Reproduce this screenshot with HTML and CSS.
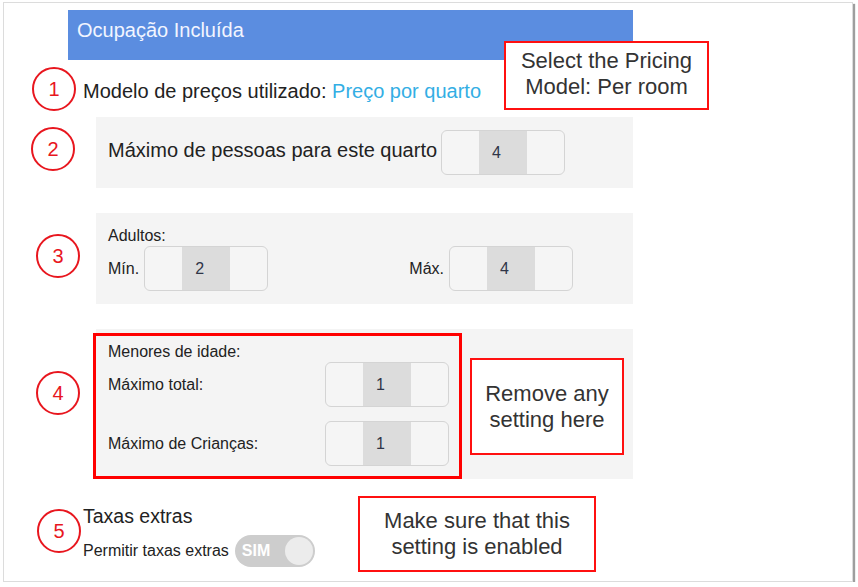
FILE: index.html
```html
<!DOCTYPE html>
<html lang="pt">
<head>
<meta charset="utf-8">
<title>Ocupação Incluída</title>
<link rel="stylesheet" href="styles.css">
</head>
<body>
<div class="frame">
  <div class="callout callout-pricing">Select the Pricing<br>Model: Per room</div>
  <div class="header">Ocupação Incluída</div>
  <div class="content">
    <div class="row-model">
      <span class="mark mark-1">1</span>
      Modelo de preços utilizado: <span class="link">Preço por quarto</span>
    </div>

    <div class="panel panel-max">
      <span class="mark mark-2">2</span>
      <span class="label-lg">Máximo de pessoas para este quarto</span>
      <div class="spinner"><span></span><span class="val">4</span><span></span></div>
    </div>

    <div class="panel panel-adults">
      <span class="mark mark-3">3</span>
      <div class="label-sm">Adultos:</div>
      <div class="adult-row">
        <div class="pair"><span class="label-sm">Mín.</span><div class="spinner"><span></span><span class="val">2</span><span></span></div></div>
        <div class="pair"><span class="label-sm">Máx.</span><div class="spinner"><span></span><span class="val">4</span><span></span></div></div>
      </div>
    </div>

    <div class="panel panel-minors">
      <span class="mark mark-4">4</span>
      <div class="redbox">
        <div class="label-sm">Menores de idade:</div>
        <div class="minor-row first"><span class="label-sm">Máximo total:</span><div class="spinner"><span></span><span class="val">1</span><span></span></div></div>
        <div class="minor-row"><span class="label-sm">Máximo de Crianças:</span><div class="spinner"><span></span><span class="val">1</span><span></span></div></div>
      </div>
      <div class="callout callout-remove">Remove any<br>setting here</div>
    </div>

    <div class="row-extras">
      <span class="mark mark-5">5</span>
      <div class="extras">
        <div class="extras-title">Taxas extras</div>
        <div class="extras-row">
          <span class="extras-label">Permitir taxas extras</span>
          <span class="toggle"><span class="toggle-text">SIM</span><span class="knob"></span></span>
        </div>
      </div>
      <div class="callout callout-enabled">Make sure that this<br>setting is enabled</div>
    </div>
  </div>
</div>
</body>
</html>
```

FILE: styles.css
```css
* { box-sizing: border-box; }
html, body { margin: 0; padding: 0; background: #ffffff; }
body { font-family: "Liberation Sans", Arial, sans-serif; color: #222; }

.frame {
  position: relative;
  margin: 2px 0 0 3px;
  width: 850px;
  height: 580px;
  background: #ffffff;
  border: 1px solid #dcdcdc;
  box-shadow: 2px 2px 1px rgba(0, 0, 0, 0.38);
}

.header {
  margin: 7px 0 0 64px;
  width: 565px;
  height: 50px;
  background: #5b8de0;
  color: #f2f5ff;
  font-size: 20px;
  line-height: 24px;
  padding: 8px 9px 0;
}

.content { padding-left: 92px; width: 629px; }

.mark {
  position: absolute;
  width: 44px;
  height: 44px;
  border: 2px solid #e8161e;
  border-radius: 50%;
  color: #e8161e;
  font-size: 20px;
  display: flex;
  align-items: center;
  justify-content: center;
  background: transparent;
}
.mark-1 { left: -51px; top: -12px; }
.mark-2 { left: -65px; top: 10px; }
.mark-3 { left: -60px; top: 21px; }
.mark-4 { left: -60px; top: 42px; }
.mark-5 { left: -46px; top: 5px; }

.row-model {
  position: relative;
  margin: 19px 0 0 -13px;
  font-size: 20px;
  line-height: 24px;
  color: #222;
}
.link { color: #33aee4; }

.panel { position: relative; background: #f4f4f4; }

.panel-max {
  margin-top: 14px;
  height: 71px;
  padding: 0 12px;
  display: flex;
  align-items: center;
  gap: 4px;
}
.label-lg { font-size: 20px; line-height: 24px; color: #222; padding-bottom: 6px; }
.label-sm { font-size: 16px; line-height: 18px; color: #222; }

.spinner {
  width: 124px;
  height: 45px;
  border: 1px solid #d4d4d4;
  border-radius: 6px;
  background: #f5f5f5;
  display: grid;
  grid-template-columns: 1fr 48px 1fr;
  overflow: hidden;
  flex: none;
}
.spinner .val {
  background: #dcdcdc;
  display: flex;
  align-items: center;
  justify-content: flex-start;
  padding-left: 13px;
  font-size: 16px;
  color: #2f3548;
}

.panel-adults {
  margin-top: 25px;
  padding: 14px 60px 13px 12px;
}
.adult-row {
  margin-top: 1px;
  display: flex;
  justify-content: space-between;
}
.pair { display: flex; align-items: center; gap: 5px; }

.panel-minors {
  margin-top: 25px;
  padding-top: 4px;
  display: flex;
  align-items: flex-start;
}
.redbox {
  margin-left: -3px;
  width: 369px;
  border: 3px solid #ff0000;
  padding: 7px 10px 10px 12px;
}
.minor-row {
  margin-top: 14px;
  display: flex;
  align-items: center;
  justify-content: space-between;
}
.minor-row.first { margin-top: 1px; }

.callout {
  border: 2px solid #ff1010;
  background: #ffffff;
  color: #333;
  font-size: 22px;
  line-height: 26px;
  text-align: center;
  display: flex;
  align-items: center;
  justify-content: center;
}
.callout-pricing {
  position: absolute;
  left: 500px;
  top: 38px;
  width: 205px;
  height: 69px;
  padding-bottom: 3px;
}
.callout-remove {
  margin: 25px 0 0 8px;
  width: 154px;
  height: 97px;
}
.callout-enabled {
  margin-top: -8px;
  width: 238px;
  height: 76px;
}

.row-extras {
  position: relative;
  margin: 25px 0 0 -13px;
  display: flex;
  align-items: flex-start;
}
.extras { width: 275px; }
.extras-title { font-size: 19.5px; line-height: 24px; color: #222; }
.extras-row {
  margin-top: 7px;
  display: flex;
  align-items: center;
  gap: 6px;
}
.extras-label { font-size: 16px; line-height: 18px; color: #222; }
.toggle {
  width: 80px;
  height: 32px;
  border-radius: 16px;
  background: #cdcdcd;
  display: flex;
  align-items: center;
  justify-content: space-between;
  padding: 0 2px 0 7px;
  flex: none;
}
.toggle-text { color: #ffffff; font-size: 16px; font-weight: bold; }
.knob {
  width: 28px;
  height: 28px;
  border-radius: 50%;
  background: #ececec;
}
```
